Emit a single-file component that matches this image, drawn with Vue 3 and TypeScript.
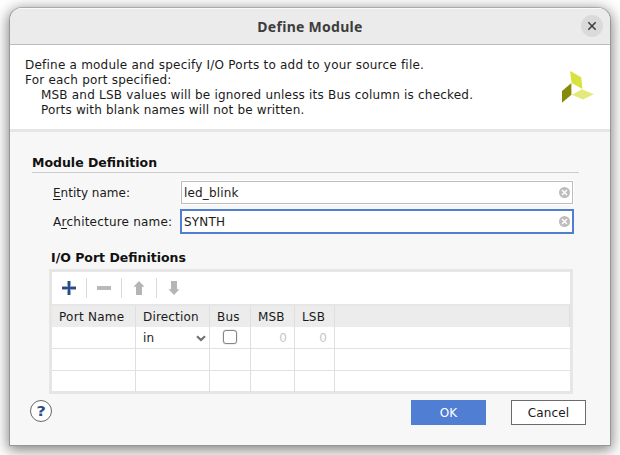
<script setup lang="ts">
import { ref } from 'vue'

const entity = ref('led_blink')
const architecture = ref('SYNTH')
const columns: string[] = ['Port Name', 'Direction', 'Bus', 'MSB', 'LSB', '']
const emptyRows = 2
</script>

<template>
  <div class="desktop">
    <section class="dialog" role="dialog">
      <header class="titlebar">
        <h1>Define Module</h1>
        <button class="close" aria-label="Close">
          <svg width="22" height="22" viewBox="0 0 22 22"><path d="M7.3 7.3l7.4 7.4M14.7 7.3l-7.4 7.4" stroke="#3d3d3d" stroke-width="1.5" /></svg>
        </button>
      </header>

      <div class="intro">
        <div class="copy">
          <p class="l1">Define a module and specify I/O Ports to add to your source file.</p>
          <p class="l2">For each port specified:</p>
          <p class="l3 indent">MSB and LSB values will be ignored unless its Bus column is checked.</p>
          <p class="l4 indent">Ports with blank names will not be written.</p>
        </div>
        <svg class="logo" width="34" height="34" viewBox="0 0 34 34">
          <path d="M10 1L21.200 7.300L22.400 19L11.700 13Z" fill="#d7e23c" />
          <path d="M2 21L11.400 13V24.700L2 32.800Z" fill="#858a08" />
          <path d="M11.800 24.700L22 19.300L33.800 24.300L23 29.400Z" fill="#e3ea7c" />
        </svg>
      </div>

      <main class="body">
        <h2 class="module-title"><span>Module Definition</span></h2>
        <div class="form">
          <div class="row">
            <label class="entity-label"><u>E</u>ntity name:</label>
            <div class="field">
              <span class="value">{{ entity }}</span>
              <svg class="clear" width="11" height="11" viewBox="0 0 11 11"><circle cx="5.5" cy="5.5" r="5.5" fill="#bdbdbd" /><path d="M3 3l5 5M8 3l-5 5" stroke="#fff" stroke-width="1.4" /></svg>
            </div>
          </div>
          <div class="row">
            <label class="arch-label">A<u>r</u>chitecture name:</label>
            <div class="field focused">
              <span class="value">{{ architecture }}</span>
              <svg class="clear" width="11" height="11" viewBox="0 0 11 11"><circle cx="5.5" cy="5.5" r="5.5" fill="#bdbdbd" /><path d="M3 3l5 5M8 3l-5 5" stroke="#fff" stroke-width="1.4" /></svg>
            </div>
          </div>
        </div>

        <h2 class="ports-title"><span>I/O Port Definitions</span></h2>
        <div class="ports">
          <div class="toolbar">
            <svg width="14" height="14" viewBox="0 0 14 14"><path d="M5 0h4v14h-4zM0 5h14v4h-14z" fill="#9aabca" /><path d="M6 0h2v14h-2zM0 6h14v2h-14z" fill="#2b4a86" /></svg>
            <i></i>
            <svg width="14" height="14" viewBox="0 0 14 14"><path d="M0 5h14v4h-14z" fill="#b9b9b9" /></svg>
            <i></i>
            <svg width="14" height="14" viewBox="0 0 14 14"><path d="M7 0l5.500 5.700H10V14H4V5.700H1.500Z" fill="#b5b5b5" /></svg>
            <i></i>
            <svg width="14" height="14" viewBox="0 0 14 14"><path d="M7 14l5.500-5.700H10V0H4V8.300H1.500Z" fill="#b5b5b5" /></svg>
          </div>
          <div class="grid head">
            <div v-for="(c, i) in columns" :key="i"><span>{{ c }}</span></div>
          </div>
          <div class="grid line">
            <div></div>
            <div class="select"><span>in</span><svg width="10" height="7" viewBox="0 0 10 7"><path d="M1 1.300l4 3.700l4-3.700" fill="none" stroke="#707070" stroke-width="2.200" /></svg></div>
            <div class="check"><span class="box"></span></div>
            <div class="num">0</div>
            <div class="num">0</div>
            <div></div>
          </div>
          <div v-for="r in emptyRows" :key="r" class="grid line">
            <div v-for="c in columns.length" :key="c"></div>
          </div>
        </div>

        <footer class="footer">
          <button class="help"><span>?</span></button>
          <button class="btn primary">OK</button>
          <button class="btn cancel">Cancel</button>
        </footer>
      </main>
    </section>
  </div>
</template>

<style>
body { margin: 0; background: #fff; }
</style>

<style scoped>
* { box-sizing: border-box; }
.desktop { width: 620px; height: 455px; padding: 7px 9px 9px; overflow: hidden; font: 12px/15px "DejaVu Sans", sans-serif; color: #1a1a1a; letter-spacing: 0.17px; white-space: nowrap; }
h1, h2, p { margin: 0; }
button { padding: 0; font: inherit; letter-spacing: inherit; color: inherit; }
.dialog { width: 602px; height: 439px; border: 1px solid #979797; border-top-color: #aaa; border-radius: 13px 13px 0 0; background: #f7f7f7; overflow: hidden; box-shadow: 0 3px 14px 1px rgba(0, 0, 0, .5); }
.titlebar { height: 37px; background: #ebebeb; border-bottom: 1px solid #bcbcbc; box-shadow: inset 0 1px #fafafa; display: grid; grid-template-columns: 1fr auto 1fr; align-items: center; padding-right: 7px; }
h1 { grid-column: 2; font: bold 14px/18px "Noto Sans", sans-serif; color: #3d3d3d; letter-spacing: 0.28px; padding: 1px 0 0 7px; }
.close { justify-self: end; width: 22px; height: 22px; border: 0; border-radius: 50%; background: #dadada; display: flex; }
.intro { height: 87px; background: #fff; border-bottom: 3px solid #e6e6e6; padding: 13px 16px 0 15px; display: flex; justify-content: space-between; }
.l1 { letter-spacing: 0.22px; }
.l2 { letter-spacing: 0.21px; }
.l3 { letter-spacing: 0.2px; }
.indent { padding-left: 16px; }
.logo { margin-top: 12px; }
.body { padding: 22px 24px 0 22px; }
h2 { font-size: 12.5px; line-height: 17px; letter-spacing: 0; color: #111; }
.module-title { border-bottom: 1px solid #ccc; height: 19px; width: 547px; }
.form { padding: 7px 0 0 21px; display: grid; gap: 4px; }
.row { display: flex; align-items: center; height: 25px; }
label { width: 127px; padding-top: 2px; }
.value { padding-top: 2px; }
.entity-label { letter-spacing: 0; }
.arch-label { letter-spacing: 0.2px; }
u { text-decoration: none; box-shadow: 0 1px #1a1a1a; display: inline-block; height: 13px; line-height: 15px; }
.field { width: 394px; height: 25px; border: 1px solid #fff; background: #fff; box-shadow: inset 0 0 0 1px #bdbdbd; padding: 0 3px; display: flex; align-items: center; justify-content: space-between; }
.field.focused { border: 2px solid #4f7ed2; box-shadow: none; padding: 0 2px; }
.ports-title { margin: 15px 0 0 19px; }
.ports { width: 524px; height: 125px; margin: 3px 0 0 17px; border: 3px solid #e6e6e6; background: #fff; }
.toolbar { height: 34px; border-bottom: 2px solid #e6e6e6; display: flex; align-items: center; padding-left: 10px; }
.toolbar i { width: 1px; height: 20px; background: #d9d9d9; margin: 0 10px; }
.grid { display: grid; grid-template-columns: 84px 74px 41px 44px 40px 1fr; }
.grid > div { border-right: 1px solid #dfdfdf; }
.head { height: 21px; line-height: 20px; background: #ececec; }
.head > div { padding: 1px 0 0 7px; }
.head > div:first-child { letter-spacing: 0.27px; }
.line { height: 22px; border-bottom: 1px solid #e2e2e2; line-height: 21px; }
.line:last-child { height: 21px; border-bottom: 0; }
.line > div:last-child { border-right: 0; }
.select { display: flex; align-items: center; justify-content: space-between; padding: 0 3px 0 7px; }
.select span { line-height: 19px; padding-top: 2px; }
.select svg { margin-top: 2px; }
.check { display: flex; align-items: center; justify-content: center; }
.box { width: 14px; height: 14px; margin-top: -1px; border: 1px solid #858585; border-radius: 3px; background: #fff; box-shadow: 0 0 0 .5px #ddd; }
.num { text-align: right; padding: 2px 7px 0 0; line-height: 19px; color: #c5c5c5; }
.footer { display: flex; align-items: flex-start; margin-top: 6px; margin-left: -2px; }
.help { width: 22px; height: 22px; border: 1px solid #686868; border-radius: 50%; background: #fff; color: #2b4a86; font-weight: bold; font-size: 14px; line-height: 20px; display: flex; justify-content: center; }
.help span { transform: scaleX(1.15); }
.btn { width: 75px; height: 25px; border: 1px solid #6b6b6b; background: #fff; padding-top: 2px; }
.primary { margin-left: 359px; border-color: #4f7ed2; background: #4f7ed2; color: #fff; }
.cancel { margin-left: 25px; }
</style>
